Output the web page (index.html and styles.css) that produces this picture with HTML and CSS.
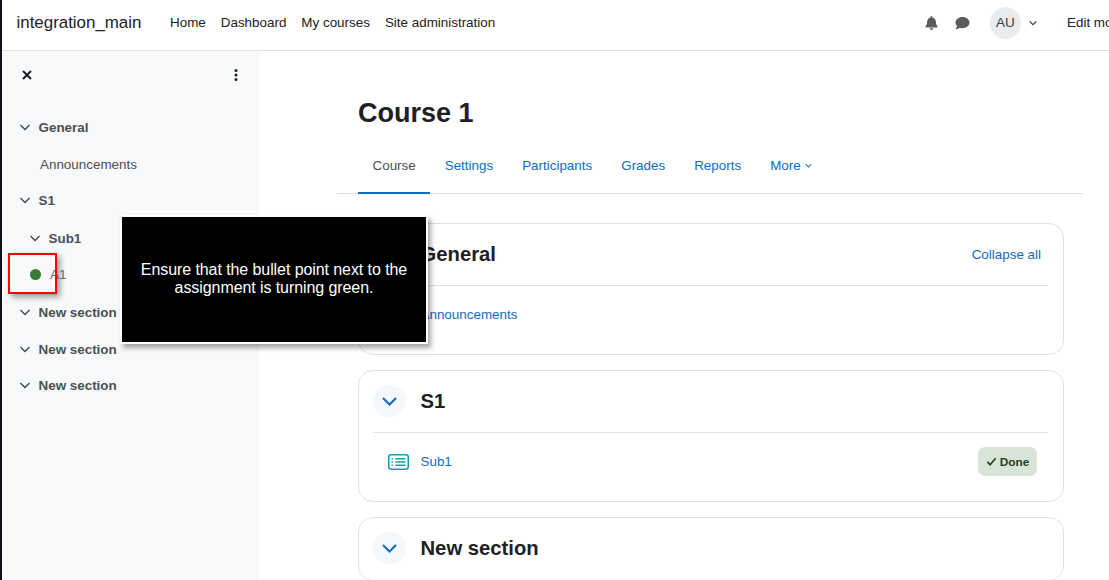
FILE: index.html
```html
<!DOCTYPE html>
<html lang="en">
<head>
<meta charset="utf-8">
<title>Course 1</title>
<link rel="stylesheet" href="styles.css">
</head>
<body>
<div class="page">
  <header class="topbar">
    <a class="brand">integration_main</a>
    <nav class="primary">
      <a>Home</a><a>Dashboard</a><a>My courses</a><a>Site administration</a>
    </nav>
    <div class="tools">
      <svg class="bell" viewBox="0 0 448 512"><path fill="#5c5c5c" d="M224 512c35 0 64-29 64-64H160c0 35 29 64 64 64zm215-150c-19-21-55-52-55-154 0-78-54-140-128-155V32a32 32 0 0 0-64 0v21C118 68 64 130 64 208c0 102-36 133-55 154-6 6-9 14-9 22 0 16 13 32 32 32h384c19 0 32-16 32-32 0-8-3-16-9-22z"/></svg>
      <svg class="chat" viewBox="0 0 512 512"><path fill="#5c5c5c" d="M256 32C115 32 0 125 0 240c0 50 22 95 58 131-13 50-54 94-55 95-2 2-3 6-2 9s4 5 7 5c67 0 118-32 143-52 33 12 68 19 105 19 141 0 256-93 256-208S397 32 256 32z"/></svg>
      <span class="avatar">AU</span>
      <svg class="caret" viewBox="0 0 12 12"><path d="M2 4l4 4 4-4" fill="none" stroke="#343a40" stroke-width="1.4"/></svg>
      <span class="edit">Edit mode</span>
    </div>
  </header>
  <div class="body">
    <aside class="index">
      <div class="index-tools">
        <svg class="close" viewBox="0 0 10 10"><path d="M1 1l8 8M9 1l-8 8" stroke="#1d2125" stroke-width="2" fill="none"/></svg>
        <svg class="kebab" viewBox="0 0 4 12"><circle cx="2" cy="1.500" r="1.500"/><circle cx="2" cy="6" r="1.500"/><circle cx="2" cy="10.500" r="1.500"/></svg>
      </div>
      <div class="idx-row sec first"><svg class="chev" viewBox="0 0 12 12"><path d="M1.500 4l4.500 4.500 4.500-4.500"/></svg>General</div>
      <div class="idx-row item">Announcements</div>
      <div class="idx-row sec s1"><svg class="chev" viewBox="0 0 12 12"><path d="M1.500 4l4.500 4.500 4.500-4.500"/></svg>S1</div>
      <div class="idx-row sec sub"><svg class="chev" viewBox="0 0 12 12"><path d="M1.500 4l4.500 4.500 4.500-4.500"/></svg>Sub1</div>
      <div class="idx-row act"><span class="dot"></span>A1</div>
      <div class="idx-row sec ns"><svg class="chev" viewBox="0 0 12 12"><path d="M1.500 4l4.500 4.500 4.500-4.500"/></svg>New section</div>
      <div class="idx-row sec ns"><svg class="chev" viewBox="0 0 12 12"><path d="M1.500 4l4.500 4.500 4.500-4.500"/></svg>New section</div>
      <div class="idx-row sec ns"><svg class="chev" viewBox="0 0 12 12"><path d="M1.500 4l4.500 4.500 4.500-4.500"/></svg>New section</div>
    </aside>
    <main class="main">
      <h1 class="title">Course 1</h1>
      <nav class="tabs">
        <a class="tab active">Course</a><a class="tab">Settings</a><a class="tab">Participants</a><a class="tab">Grades</a><a class="tab">Reports</a>
        <a class="tab">More<svg class="more" viewBox="0 0 12 12"><path d="M2 4l4 4 4-4" fill="none" stroke="#0f6cbf" stroke-width="1.400"/></svg></a>
      </nav>
      <section class="card general">
        <div class="card-head">
          <span class="toggle"><svg viewBox="0 0 16 16"><path d="M2.500 5l5.500 5.500L13.500 5"/></svg></span>
          <h2>General</h2>
          <a class="collapse">Collapse all</a>
        </div>
        <div class="card-body">
          <div class="activity"><span class="ico-spacer"></span><a>Announcements</a></div>
        </div>
      </section>
      <section class="card">
        <div class="card-head">
          <span class="toggle"><svg viewBox="0 0 16 16"><path d="M2.500 5l5.500 5.500L13.500 5"/></svg></span>
          <h2>S1</h2>
        </div>
        <div class="card-body">
          <div class="activity">
            <svg class="sub-ico" viewBox="0 0 21 16"><rect x=".75" y=".75" width="19.500" height="14.500" rx="2.500" fill="none" stroke="#11a2b5" stroke-width="1.500"/><path d="M7.500 4.700h10M7.500 8h10M7.500 11.300h10M3.500 4.700h1.500M3.500 8h1.500M3.500 11.300h1.500" stroke="#11a2b5" stroke-width="1.400"/></svg>
            <a>Sub1</a>
            <span class="badge"><svg viewBox="0 0 12 12"><path d="M1.500 6.500l3 3 6-7" fill="none" stroke="#1c3f26" stroke-width="1.800"/></svg>Done</span>
          </div>
        </div>
      </section>
      <section class="card">
        <div class="card-head">
          <span class="toggle"><svg viewBox="0 0 16 16"><path d="M2.500 5l5.500 5.500L13.500 5"/></svg></span>
          <h2>New section</h2>
        </div>
      </section>
    </main>
  </div>
  <div class="spot"></div>
  <div class="tip"><p>Ensure that the bullet point next to the assignment is turning green.</p></div>
</div>
</body>
</html>
```
FILE: styles.css
```css
* { box-sizing: border-box; }
html, body { margin: 0; height: 100%; overflow: hidden; }
body { background: #fff; font-family: "Liberation Sans", Arial, sans-serif; color: #1d2125; font-size: 13.420px; }
a { color: inherit; text-decoration: none; }
.page { position: relative; width: 1109px; height: 580px; overflow: hidden; border-left: 2px solid #12101a; }

.topbar { height: 51px; border-bottom: 1px solid #dee2e6; display: flex; align-items: center; padding: 0 0 5px 14.500px; white-space: nowrap; }
.brand { font-size: 16.900px; width: 153.500px; flex: none; }
.primary { display: flex; gap: 15px; }
.tools { margin-left: auto; display: flex; align-items: center; width: 184px; flex: none; overflow: hidden; }
.bell { width: 13px; height: 14px; margin-right: 17px; flex: none; }
.chat { width: 15px; height: 14px; margin-right: 20px; flex: none; }
.avatar { width: 31px; height: 32px; border-radius: 50%; background: #e9ecef; display: flex; align-items: center; justify-content: center; font-size: 13.500px; color: #343a40; flex: none; }
.caret { width: 10px; height: 10px; margin-left: 7px; flex: none; }
.edit { margin-left: 29px; }

.body { display: flex; height: 529px; }
.index { width: 257px; flex: none; background: #f8f9fa; padding: 0 17px; color: #495057; }
.index-tools { height: 50px; display: flex; align-items: center; justify-content: space-between; padding: 0 4.500px 2px 3px; }
.close { width: 10px; height: 10px; }
.kebab { width: 4px; height: 12px; fill: #1d2125; }
.idx-row { display: flex; align-items: center; height: 20px; white-space: nowrap; }
.sec { font-weight: 700; color: #495057; }
.chev { width: 12px; height: 12px; margin-right: 7.500px; flex: none; }
.chev path { fill: none; stroke: #3f4850; stroke-width: 1.400; }
.first { margin-top: 16px; }
.item { margin-top: 17px; padding-left: 21px; }
.s1 { margin-top: 16px; }
.sub { margin-top: 18px; padding-left: 10px; }
.act { margin-top: 16px; padding-left: 11px; color: #6a737b; }
.dot { width: 11px; height: 11px; border-radius: 50%; background: #357a32; margin-right: 9px; flex: none; }
.ns { margin-top: 18px; }
.ns + .ns { margin-top: 17px; }
.ns + .ns + .ns { margin-top: 16px; }

.main { flex: 1; min-width: 0; padding: 0 25px 0 78px; }
.title { margin: 46px 0 0 21px; font-size: 27px; line-height: 32px; font-weight: 700; color: #1d2125; }
.tabs { display: flex; height: 51px; margin-top: 14px; padding-left: 21px; border-bottom: 1px solid #dee2e6; color: #0f6cbf; }
.tab { padding: 0 14.500px 6px; display: flex; align-items: center; height: 51px; }
.tab.active { color: #495057; border-bottom: 2px solid #0f6cbf; padding-bottom: 4px; }
.more { width: 9px; height: 9px; margin-left: 3px; }

.card { margin: 15px 20px 0 21px; border: 1px solid #dee2e6; border-radius: 15px; padding: 14px 15px 0 14px; background: #fff; }
.general { margin-top: 29px; height: 132px; }
.card-head { height: 48px; border-bottom: 1px solid #dee2e6; display: flex; align-items: flex-start; }
.card:last-child .card-head { border-bottom: 0; }
.toggle { width: 33px; height: 32px; border-radius: 50%; background: #f4f7fb; display: flex; align-items: center; justify-content: center; flex: none; }
.toggle svg { width: 19px; height: 19px; }
.toggle path { fill: none; stroke: #0f6cbf; stroke-width: 1.700; }
.card h2 { margin: 0 0 0 14.500px; font-size: 20.250px; line-height: 33px; font-weight: 700; color: #1d2125; }
.collapse { margin-left: auto; margin-right: 7px; line-height: 33px; color: #0f6cbf; }
.card-body { height: 68px; }
.general .card-body { height: 56px; }
.activity { display: flex; align-items: center; height: 56px; padding: 1px 11px 0 15px; color: #0f6cbf; }
.ico-spacer, .sub-ico { width: 21px; height: 16px; flex: none; margin-right: 11.500px; }
.badge { margin-left: auto; height: 29px; width: 59px; border-radius: 7px; background: #d9e4d8; color: #1c3f26; font-weight: 700; font-size: 11.800px; display: flex; align-items: center; justify-content: center; }
.badge svg { width: 11px; height: 11px; margin-right: 3px; }

.spot { position: absolute; left: 6px; top: 253px; width: 49px; height: 41px; border: 2px solid #f00; box-shadow: 3px 3px 6px rgba(0,0,0,.4); }
.tip { position: absolute; left: 120px; top: 217px; width: 304px; height: 125px; background: #000; color: #fff; box-shadow: 0 0 0 2px #fff, 3px 4px 5px 2px rgba(0,0,0,.35); display: flex; align-items: center; justify-content: center; padding: 0 16px 2px; text-align: center; font-size: 16px; line-height: 18px; letter-spacing: -.08px; }
.tip p { margin: 0; }
```
